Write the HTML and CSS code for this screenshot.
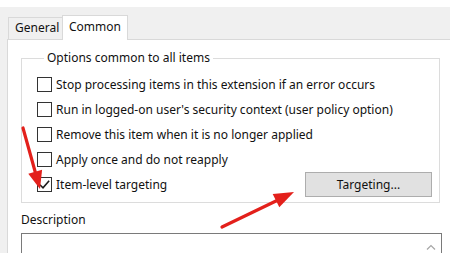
FILE: index.html
```html
<!DOCTYPE html>
<html>
<head>
<meta charset="utf-8">
<link rel="stylesheet" href="styles.css">
</head>
<body>
<div class="top"></div>
<div class="window">
  <div class="tabs">
    <div class="tab">General</div>
    <div class="tab active">Common</div>
  </div>
  <div class="panel">
    <fieldset class="group">
      <legend>Options common to all items</legend>
      <div class="row"><span class="cb"></span><span>Stop processing items in this extension if an error occurs</span></div>
      <div class="row"><span class="cb"></span><span>Run in logged-on user's security context (user policy option)</span></div>
      <div class="row"><span class="cb"></span><span>Remove this item when it is no longer applied</span></div>
      <div class="row"><span class="cb"></span><span>Apply once and do not reapply</span></div>
      <div class="row"><span class="cb checked"><svg viewBox="0 0 14 14" width="13" height="13"><path d="M2 7.3 L5.4 10.6 L12 3" fill="none" stroke="#1a1a1a" stroke-width="1.7"/></svg></span><span>Item-level targeting</span><button class="btn">Targeting...</button></div>
    </fieldset>
    <div class="desc-label">Description</div>
    <div class="textbox">
      <div class="scroll"><svg viewBox="0 0 10 6" width="10" height="6"><path d="M1 5.5 L5 1.5 L9 5.5" fill="none" stroke="#a6a6a6" stroke-width="1.2"/></svg></div>
    </div>
  </div>
</div>
<svg class="arrows" width="450" height="253" viewBox="0 0 450 253">
  <line x1="23" y1="128" x2="35.5" y2="173" stroke="#e3201b" stroke-width="3.2" stroke-linecap="round"/>
  <polygon points="40,189 28.3,173.8 42.1,169.8" fill="#e3201b"/>
  <line x1="222" y1="227" x2="277" y2="200.5" stroke="#e3201b" stroke-width="3.2" stroke-linecap="round"/>
  <polygon points="294,192 279.3,207.3 272.7,194" fill="#e3201b"/>
</svg>
</body>
</html>
```
FILE: styles.css
```css
html, body {
  margin: 0;
  padding: 0;
  background: #ffffff;
  width: 450px;
  height: 253px;
  overflow: hidden;
  font-family: "Noto Sans", "Liberation Sans", sans-serif;
  font-size: 12px;
  color: #111;
}
.top {
  height: 7px;
  background: #ffffff;
}
.window {
  background: #f0f0f0;
  padding-left: 7px;
  height: 246px;
  overflow: hidden;
}
.tabs {
  display: flex;
  align-items: flex-end;
  height: 32px;
  padding-left: 1px;
}
.tab {
  height: 21px;
  line-height: 20px;
  padding: 0 6px;
  border: 1px solid #d9d9d9;
  border-bottom: none;
  background: #f0f0f0;
  width: 41px;
  box-sizing: content-box;
  text-align: center;
  position: relative;
}
.tab.active {
  background: #ffffff;
  height: 24px;
  line-height: 22px;
  width: 52px;
  margin-left: -1px;
  margin-bottom: -1px;
  z-index: 1;
}
.panel {
  background: #ffffff;
  border-top: 1px solid #d9d9d9;
  border-left: 1px solid #d9d9d9;
  height: 213px;
  padding-left: 13px;
  overflow: hidden;
}
.group {
  margin: 10px 0 0 0;
  width: 419px;
  border: 1px solid #dcdcdc;
  padding: 6px 7px 4px 15px;
  box-sizing: border-box;
  height: 153px;
}
.group legend {
  margin-left: 7px;
  padding: 0 3px;
  line-height: 16px;
  height: 16px;
}
.row {
  display: flex;
  align-items: center;
  height: 25px;
  white-space: nowrap;
}
.cb {
  width: 13px;
  height: 13px;
  border: 1px solid #333;
  margin-right: 4px;
  display: flex;
  align-items: center;
  justify-content: center;
  flex: none;
  background: #fff;
}
.btn {
  margin-left: auto;
  width: 127px;
  height: 25px;
  background: #e1e1e1;
  border: 1px solid #adadad;
  font-family: inherit;
  font-size: 12px;
  color: #111;
  padding: 0;
}
.desc-label {
  margin-top: 9px;
  line-height: 16px;
  height: 16px;
}
.textbox {
  margin-top: 5px;
  width: 421px;
  height: 30px;
  border: 1px solid #7a7a7a;
  border-bottom: none;
  box-sizing: border-box;
  display: flex;
  justify-content: flex-end;
}
.scroll {
  width: 20px;
  display: flex;
  justify-content: center;
  padding-top: 10px;
  box-sizing: border-box;
}
.arrows {
  position: absolute;
  left: 0;
  top: 0;
  pointer-events: none;
}
```
